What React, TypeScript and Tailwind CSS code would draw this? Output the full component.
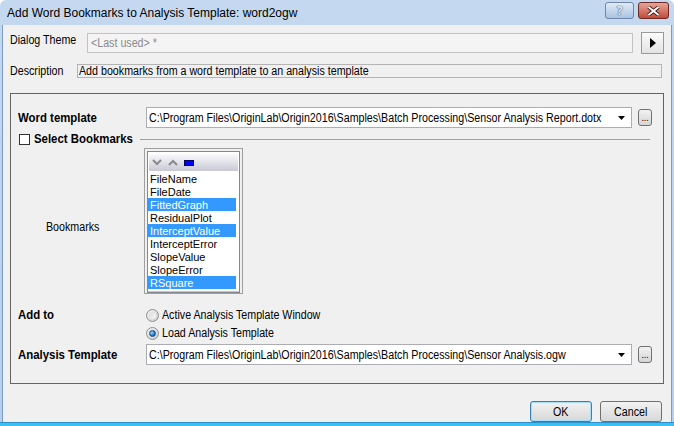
import React from "react";

const sans = { fontFamily: '"Liberation Sans", sans-serif' };

// the dialog font is a little narrower than Arial, so squeeze it
function N({ children, bold, center }: { children: React.ReactNode; bold?: boolean; center?: boolean }) {
  return (
    <span
      className={`inline-block whitespace-nowrap text-[12px] leading-[14px] ${bold ? "scale-x-[0.95] font-bold" : "scale-x-[0.89]"} ${
        center ? "origin-center" : "origin-left"
      }`}
      style={sans}
    >
      {children}
    </span>
  );
}

function Radio({ checked, label }: { checked?: boolean; label: string }) {
  return (
    <div className="flex h-[16px] items-center gap-[3px]">
      <div className="flex h-[13px] w-[13px] items-center justify-center rounded-full border border-[#8e8f8f] bg-gradient-to-br from-[#f4f4f4] to-[#cfcfcf]">
        {checked ? (
          <div className="h-[7px] w-[7px] rounded-full border border-[#1b4f8a] bg-[radial-gradient(circle_at_35%_35%,#9be3ff,#1f74c8_60%,#0f3f7a)]" />
        ) : (
          <div className="h-[7px] w-[7px] rounded-full bg-gradient-to-br from-[#dcdcdc] to-[#f7f7f7]" />
        )}
      </div>
      <N>{label}</N>
    </div>
  );
}

function Combo({ value }: { value: string }) {
  return (
    <div className="flex items-center">
      <div className="flex h-[21px] w-[486px] items-center border border-[#abadb3] bg-white pl-[2px] pr-[6px]">
        <div className="flex-1 overflow-hidden">
          <N>{value}</N>
        </div>
        <svg width="7" height="4" viewBox="0 0 7 4">
          <path d="M0 0h7L3.5 4z" fill="#000" />
        </svg>
      </div>
      <div className="ml-[6px] flex h-[17px] w-[14px] items-end justify-center rounded-[3px] border border-[#707070] bg-gradient-to-b from-[#f2f2f2] to-[#d5d5d5] pb-[3px]">
        <span className="text-[9px] leading-none text-black">...</span>
      </div>
    </div>
  );
}

const bookmarks = [
  { name: "FileName", sel: false },
  { name: "FileDate", sel: false },
  { name: "FittedGraph", sel: true },
  { name: "ResidualPlot", sel: false },
  { name: "InterceptValue", sel: true },
  { name: "InterceptError", sel: false },
  { name: "SlopeValue", sel: false },
  { name: "SlopeError", sel: false },
  { name: "RSquare", sel: true },
];

export default function App() {
  return (
    <div className="flex h-[426px] w-[674px] flex-col overflow-hidden rounded-t-[6px] bg-gradient-to-b from-[#c4d9f0] to-[#b7cfea] text-[12px] leading-[14px]">
      <div className="flex h-[26px] items-center pl-[7px] pr-[5px]">
        <span className="flex-1 text-[12px] text-black" style={sans}>
          Add Word Bookmarks to Analysis Template: word2ogw
        </span>
        <div className="mb-[4px] flex items-start gap-[4px]">
          <div className="flex h-[17px] w-[29px] items-center justify-center rounded-[3px] border border-[#6f86a8] bg-gradient-to-b from-[#e0ebf7] to-[#a9c3e2]">
            <span className="text-[12px] font-bold leading-none text-[#e8eef6] [text-shadow:0_0_1px_#2c3e5a,0_0_1px_#2c3e5a]">?</span>
          </div>
          <div className="flex h-[17px] w-[31px] items-center justify-center rounded-[3px] border border-[#6b2a25] bg-gradient-to-b from-[#e4a598] to-[#c2493b]">
            <svg width="13" height="10" viewBox="0 0 13 10">
              <path d="M1.5 1l10 8M11.5 1l-10 8" stroke="#3b1410" strokeWidth="3.6" />
              <path d="M1.5 1l10 8M11.5 1l-10 8" stroke="#fff" strokeWidth="2" />
            </svg>
          </div>
        </div>
      </div>

      <div className="mx-[2px] flex flex-1 flex-col border-x border-[#7a9cc7] bg-[#f0f0f0] px-[7px] text-black">
        <div className="mt-[7px] flex h-[21px] items-center">
          <div className="mb-[5px] w-[77px]">
            <N>Dialog Theme</N>
          </div>
          <div className="flex h-[20px] flex-1 items-center border border-[#c3c3c3] bg-[#f4f4f4] pl-[3px] text-[#8a8a8a]">
            <N>&lt;Last used&gt; *</N>
          </div>
          <div className="ml-[8px] flex h-[22px] w-[23px] items-center justify-center border border-[#9a9a9a] bg-gradient-to-b from-[#fbfbfb] to-[#e3e3e3]">
            <svg width="6" height="10" viewBox="0 0 6 10">
              <path d="M0 0l6 5-6 5z" fill="#000" />
            </svg>
          </div>
        </div>

        <div className="mt-[11px] flex h-[14px] items-center">
          <div className="w-[67px]">
            <N>Description</N>
          </div>
          <div className="mr-[2px] flex h-[14px] flex-1 items-center border border-[#b4b4b4] bg-[#f0f0f0] pl-[1px]">
            <N>Add bookmarks from a word template to an analysis template</N>
          </div>
        </div>

        <div className="mt-[15px] flex h-[291px] flex-col border border-[#646464] pl-[7px] pr-[10px]">
          <div className="mt-[13px] flex items-center">
            <div className="w-[128px]">
              <N bold>Word template</N>
            </div>
            <Combo value="C:\Program Files\OriginLab\Origin2016\Samples\Batch Processing\Sensor Analysis Report.dotx" />
          </div>

          <div className="mt-[4px] flex h-[14px] items-center">
            <div className="ml-[1px] h-[11px] w-[11px] border border-[#333] bg-white" />
            <div className="ml-[4px] w-[101px]">
              <N bold>Select Bookmarks</N>
            </div>
            <div className="ml-[5px] mr-[3px] h-px flex-1 bg-[#a0a0a0]" />
          </div>

          <div className="mt-[2px] flex items-start">
            <div className="w-[126px] pl-[28px] pt-[72px]">
              <N>Bookmarks</N>
            </div>
            <div className="flex h-[146px] w-[99px] flex-col border border-[#a0a0a0] bg-[#f0f0f0] p-[2px]">
              <div className="flex flex-1 flex-col border border-[#828790] bg-white">
                <div className="mx-[1px] mt-[2px] flex h-[17px] items-center gap-[6px] bg-gradient-to-b from-[#fafafc] to-[#c9c9d6] pl-[3px]">
                  <svg width="10" height="7" viewBox="0 0 10 7">
                    <path d="M1 1l4 4 4-4" stroke="#8a8a8a" strokeWidth="2" fill="none" />
                  </svg>
                  <svg width="10" height="7" viewBox="0 0 10 7">
                    <path d="M1 6l4-4 4 4" stroke="#8a8a8a" strokeWidth="2" fill="none" />
                  </svg>
                  <div className="h-[6px] w-[10px] border border-[#000060] bg-[#0000ff]" />
                </div>
                <div className="mt-[1px] flex flex-col">
                  {bookmarks.map((b) => (
                    <div
                      key={b.name}
                      className={`mr-[3px] flex h-[13px] items-center pl-[2px] text-[11px] ${
                        b.sel ? "bg-[#3399ff] text-white" : "text-black"
                      }`}
                      style={sans}
                    >
                      {b.name}
                    </div>
                  ))}
                </div>
                <div className="mt-[2px] border-t border-[#c8c8c8]" />
              </div>
            </div>
          </div>

          <div className="mt-[13px] flex items-start">
            <div className="flex h-[16px] w-[128px] items-center">
              <N bold>Add to</N>
            </div>
            <div className="flex flex-col gap-[2px]">
              <Radio label="Active Analysis Template Window" />
              <Radio checked label="Load Analysis Template" />
            </div>
          </div>

          <div className="mt-[3px] flex items-center">
            <div className="w-[128px]">
              <N bold>Analysis Template</N>
            </div>
            <Combo value="C:\Program Files\OriginLab\Origin2016\Samples\Batch Processing\Sensor Analysis.ogw" />
          </div>
        </div>

        <div className="mt-[17px] flex justify-end gap-[8px] pr-[2px]">
          <button className="flex h-[21px] w-[62px] items-center justify-center rounded-[3px] border border-[#3c7fb1] bg-gradient-to-b from-[#f2f2f2] to-[#d8d8d8] shadow-[inset_0_0_0_1px_#a6dcf8]">
            <N center>OK</N>
          </button>
          <button className="flex h-[21px] w-[62px] items-center justify-center rounded-[3px] border border-[#707070] bg-gradient-to-b from-[#f2f2f2] to-[#d8d8d8]">
            <N center>Cancel</N>
          </button>
        </div>
      </div>
      <div className="h-[4px] border-t border-[#2a8fc9] bg-[#3cc0ef]" />
    </div>
  );
}
